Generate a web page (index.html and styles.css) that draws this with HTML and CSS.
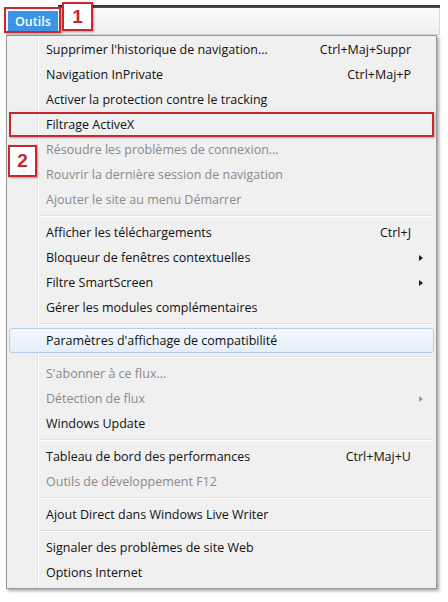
FILE: index.html
```html
<!DOCTYPE html>
<html lang="fr">
<head>
<meta charset="utf-8">
<title>Outils</title>
<link rel="stylesheet" href="styles.css">
</head>
<body>
<div class="window">
  <div class="edge"></div>
  <div class="menubar"><span class="tab">Outils</span></div>
  <div class="menu">
    <div class="item"><span class="label">Supprimer l'historique de navigation…</span><span class="key">Ctrl+Maj+Suppr</span><span class="sub"></span></div>
    <div class="item"><span class="label">Navigation InPrivate</span><span class="key">Ctrl+Maj+P</span><span class="sub"></span></div>
    <div class="item"><span class="label">Activer la protection contre le tracking</span><span class="sub"></span></div>
    <div class="item marked"><span class="label">Filtrage ActiveX</span><span class="sub"></span></div>
    <div class="item off"><span class="label">Résoudre les problèmes de connexion…</span><span class="sub"></span></div>
    <div class="item off"><span class="label">Rouvrir la dernière session de navigation</span><span class="sub"></span></div>
    <div class="item off"><span class="label">Ajouter le site au menu Démarrer</span><span class="sub"></span></div>
    <div class="sep"></div>
    <div class="item"><span class="label">Afficher les téléchargements</span><span class="key">Ctrl+J</span><span class="sub"></span></div>
    <div class="item"><span class="label">Bloqueur de fenêtres contextuelles</span><span class="sub"><span class="arrow"></span></span></div>
    <div class="item"><span class="label">Filtre SmartScreen</span><span class="sub"><span class="arrow"></span></span></div>
    <div class="item"><span class="label">Gérer les modules complémentaires</span><span class="sub"></span></div>
    <div class="sep"></div>
    <div class="item hot"><span class="label">Paramètres d'affichage de compatibilité</span><span class="sub"></span></div>
    <div class="sep"></div>
    <div class="item off"><span class="label">S'abonner à ce flux…</span><span class="sub"></span></div>
    <div class="item off"><span class="label">Détection de flux</span><span class="sub"><span class="arrow"></span></span></div>
    <div class="item"><span class="label">Windows Update</span><span class="sub"></span></div>
    <div class="sep"></div>
    <div class="item"><span class="label">Tableau de bord des performances</span><span class="key">Ctrl+Maj+U</span><span class="sub"></span></div>
    <div class="item off"><span class="label">Outils de développement F12</span><span class="sub"></span></div>
    <div class="sep"></div>
    <div class="item"><span class="label">Ajout Direct dans Windows Live Writer</span><span class="sub"></span></div>
    <div class="sep"></div>
    <div class="item"><span class="label">Signaler des problèmes de site Web</span><span class="sub"></span></div>
    <div class="item"><span class="label">Options Internet</span><span class="sub"></span></div>
  </div>
  <div class="callout tabmark"></div>
  <div class="callout num one">1</div>
  <div class="callout num two">2</div>
</div>
</body>
</html>
```

FILE: styles.css
```css
html, body {
  margin: 0;
  padding: 0;
  background: #ffffff;
}

body {
  font-family: "Open Sans", "Noto Sans", sans-serif;
  font-size: 12.5px;
  color: #111111;
}

.window {
  position: relative;
  width: 448px;
  height: 602px;
  padding-top: 5px;
  box-sizing: border-box;
}

.edge {
  height: 3px;
  margin: 0 8px 0 58px;
  background: linear-gradient(#2c2c2c, #555555);
}

.menubar {
  display: flex;
  align-items: center;
  height: 26px;
  margin: 0 8px 0 6px;
  padding-left: 2px;
  background: linear-gradient(#fbfbfb, #eef0f2);
  border-bottom: 1px solid #d6d8da;
  border-right: 1px solid #d6d8da;
}

.tab {
  display: flex;
  align-items: center;
  height: 21px;
  padding: 0 7px;
  background: #3b93e6;
  color: #ffffff;
  font-weight: 600;
}

.menu {
  width: 431px;
  margin-left: 6px;
  box-sizing: border-box;
  padding: 1px 2px 3px;
  border: 1px solid #979797;
  background-color: #f0f0f0;
  background-image: linear-gradient(90deg, transparent 30px, #e2e3e3 30px, #e2e3e3 31px, #ffffff 31px, #ffffff 32px, transparent 32px);
  box-shadow: 2px 2px 3px rgba(0, 0, 0, 0.35);
}

.item {
  display: flex;
  align-items: center;
  height: 25px;
  box-sizing: border-box;
  padding: 0 4px 0 36px;
  border: 1px solid transparent;
  white-space: nowrap;
}

.item .label {
  flex: 1;
}

.item .key {
  margin-left: 12px;
  margin-right: 2px;
}

.item .sub {
  width: 16px;
  display: flex;
  justify-content: center;
}

.arrow {
  width: 0;
  height: 0;
  border-top: 3.5px solid transparent;
  border-bottom: 3.5px solid transparent;
  border-left: 4px solid #1d1d1d;
}

.item.off {
  color: #8a8a8a;
}

.item.off .arrow {
  border-left-color: #9a9a9a;
}

.item.marked {
  border: 2px solid #c62832;
  padding-left: 35px;
  box-shadow: 1px 1px 2px rgba(0, 0, 0, 0.3);
}

.item.hot {
  border: 1px solid #b0cdee;
  border-radius: 3px;
  background: linear-gradient(#f4f8fd, #e4eefa);
}

.sep {
  height: 1px;
  margin: 3px 2px 3px 31px;
  background: #e0e0e0;
  border-bottom: 1px solid #ffffff;
}

.callout {
  position: absolute;
  box-sizing: border-box;
  border: 2px solid #c62832;
  box-shadow: 1px 1px 2px rgba(0, 0, 0, 0.35);
}

.tabmark {
  left: 4px;
  top: 7px;
  width: 57px;
  height: 26px;
}

.num {
  display: flex;
  align-items: center;
  justify-content: center;
  background: #ffffff;
  color: #c62832;
  font-family: "Liberation Sans", Arial, sans-serif;
  font-weight: 700;
  font-size: 19px;
}

.one {
  left: 62px;
  top: 2px;
  width: 31px;
  height: 29px;
}

.two {
  left: 8px;
  top: 145px;
  width: 29px;
  height: 32px;
}
```
